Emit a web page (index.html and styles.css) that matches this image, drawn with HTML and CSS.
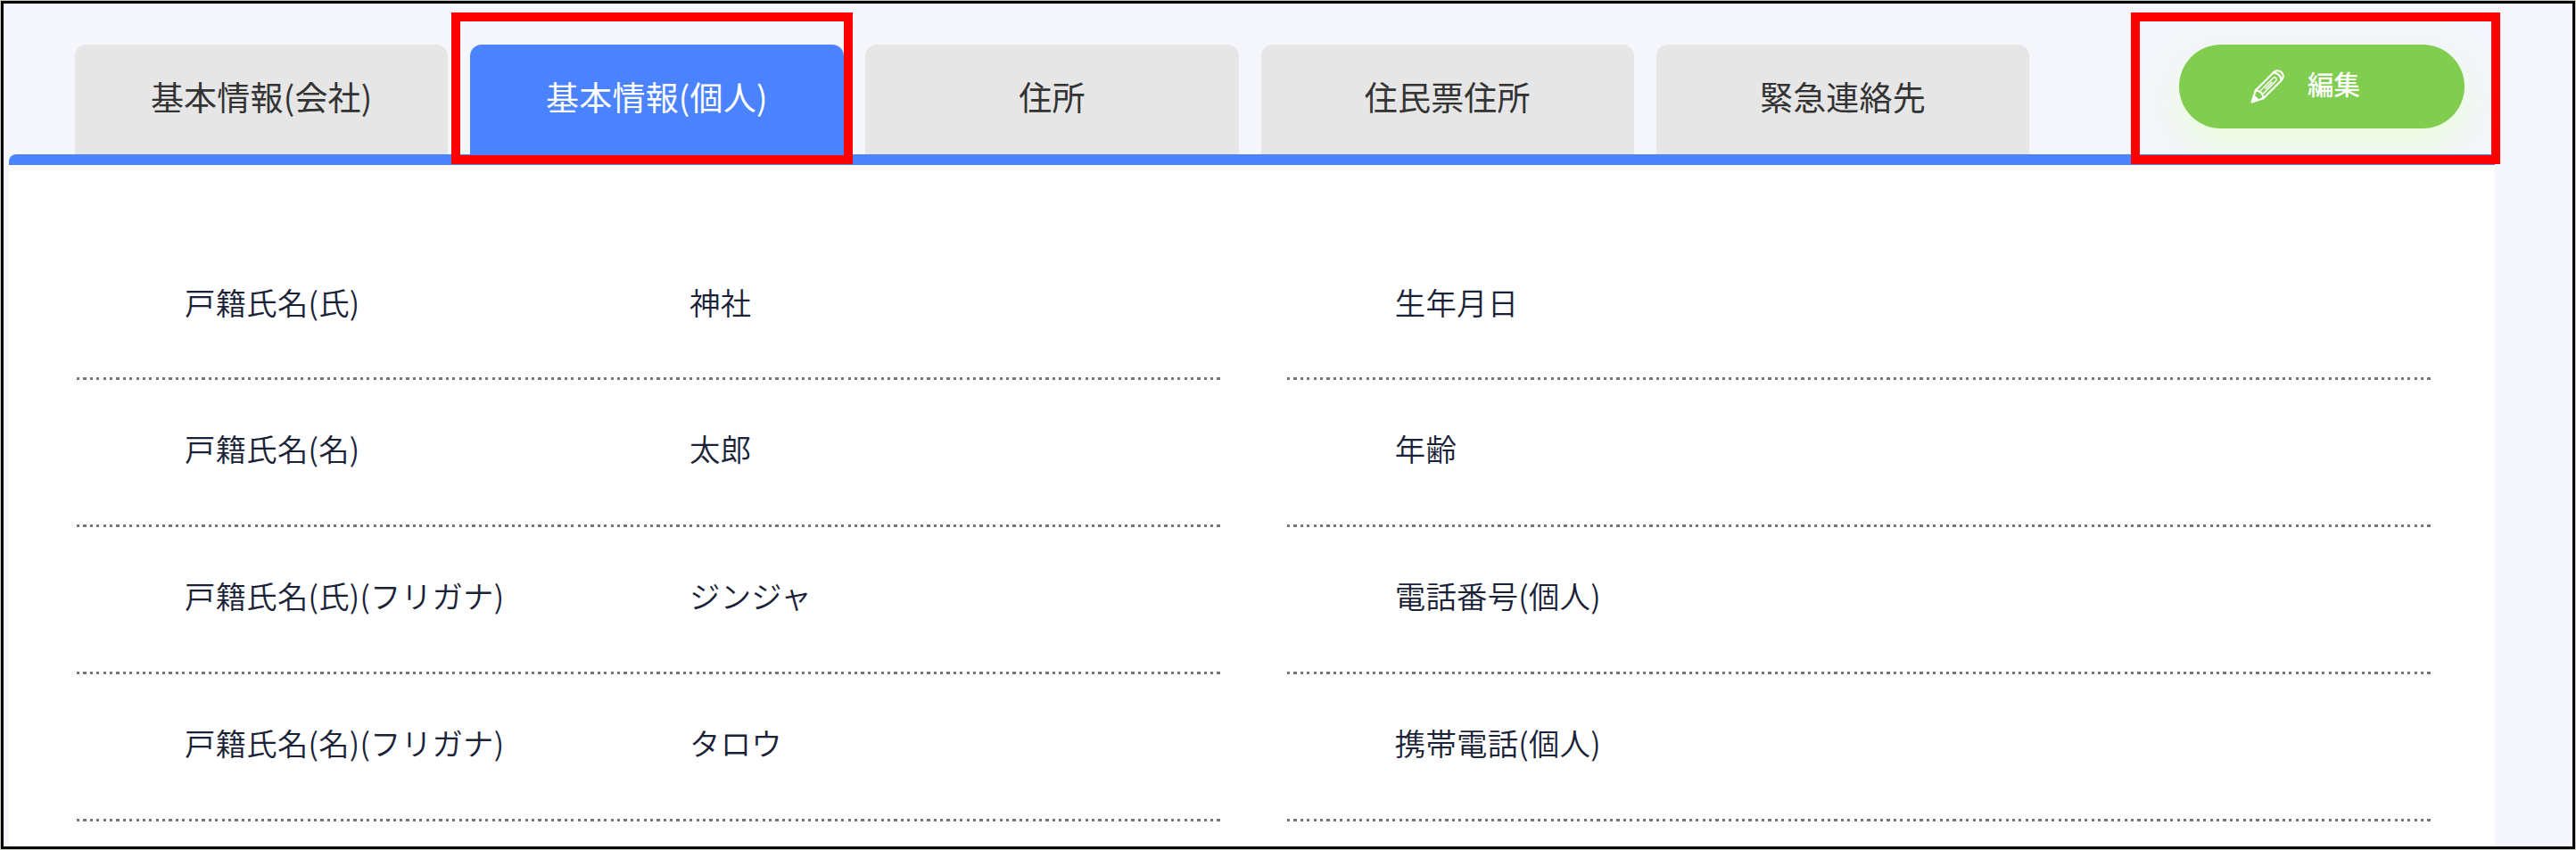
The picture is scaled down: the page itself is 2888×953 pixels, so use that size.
FILE: index.html
```html
<!DOCTYPE html>
<html lang="ja">
<head>
<meta charset="utf-8">
<title>基本情報(個人)</title>
<link rel="stylesheet" href="styles.css">
</head>
<body>
<main class="screen">
  <header class="toolbar">
    <nav class="tabs">
      <a class="tab">基本情報(会社)</a>
      <a class="tab tab-active">基本情報(個人)</a>
      <a class="tab">住所</a>
      <a class="tab">住民票住所</a>
      <a class="tab">緊急連絡先</a>
    </nav>
    <button class="edit" type="button">
      <svg class="pencil" viewBox="0 0 38 38" fill="none" stroke="#fff" stroke-width="2.2" stroke-linejoin="round" stroke-linecap="round">
        <path d="M1.6 36.4 5.8 23.4 25.8 3.4C28.8.4 32.6 1 34.9 3.2 37.2 5.5 37.6 9.2 34.6 12.2L14.6 32.2Z"/>
        <path d="M26.5 3.6C31 4.2 33.8 7 34.4 11.5M6 23.8C10.5 23.2 14.8 27.5 14.2 32"/>
        <path d="M11.5 23.5 25.5 9.5C28 7.8 30.4 10.4 28.6 12.6L14.8 26.6M17 21.2 23.8 14.4" stroke-width="1.5"/>
        <path d="M1.6 36.4 3.8 29.5C6 29.8 8.1 31.9 8.5 34.2Z" fill="#fff" stroke-width="1"/>
      </svg>
      <span class="edit-label">編集</span>
    </button>
  </header>
  <section class="panel">
    <dl class="column">
      <div class="row"><dt>戸籍氏名(氏)</dt><dd>神社</dd></div>
      <div class="row"><dt>戸籍氏名(名)</dt><dd>太郎</dd></div>
      <div class="row"><dt>戸籍氏名(氏)(フリガナ)</dt><dd>ジンジャ</dd></div>
      <div class="row"><dt>戸籍氏名(名)(フリガナ)</dt><dd>タロウ</dd></div>
    </dl>
    <dl class="column">
      <div class="row"><dt>生年月日</dt><dd></dd></div>
      <div class="row"><dt>年齢</dt><dd></dd></div>
      <div class="row"><dt>電話番号(個人)</dt><dd></dd></div>
      <div class="row"><dt>携帯電話(個人)</dt><dd></dd></div>
    </dl>
  </section>
  <div class="marker marker-tab"></div>
  <div class="marker marker-edit"></div>
</main>
</body>
</html>
```
FILE: styles.css
```css
* { box-sizing: border-box; }

body {
  margin: 0;
  padding: 1px;
  background: #c6cbc4;
  font-family: "Noto Sans CJK JP", sans-serif;
}

.screen {
  display: flex;
  flex-direction: column;
  width: 2886px;
  height: 951px;
  padding: 45.5px 87px 0 6px;
  border: 3px solid #000;
  background: #f4f6fb;
  overflow: hidden;
}

.toolbar {
  display: flex;
  justify-content: space-between;
  height: 123px;
  flex: none;
  padding: 0 34.5px 0 74px;
}

.tabs {
  display: flex;
  gap: 24.8px;
}

.tab {
  width: 418.4px;
  height: 123px;
  border-radius: 13px 13px 0 0;
  background: #e6e6e6;
  color: #333;
  font-size: 37px;
  line-height: 117px;
  text-align: center;
  letter-spacing: 0.2px;
}

.tab-active {
  background: #4b83ff;
  color: #fff;
}

.edit {
  display: flex;
  align-items: center;
  width: 320px;
  height: 94px;
  padding: 0 0 0 80.5px;
  gap: 26px;
  border: 0;
  border-radius: 47px;
  background: #80cd50;
  box-shadow: 0 18px 37px rgba(232, 255, 208, 0.75);
  color: #fff;
  font: 500 29.5px/44px "Noto Sans CJK JP", sans-serif;
}

.edit-label {
  padding-bottom: 7px;
}

.pencil {
  width: 38px;
  height: 38px;
}

.panel {
  display: flex;
  flex: 1;
  gap: 74.5px;
  padding: 77px 72px 0 76px;
  border-top: 12.5px solid #4b83ff;
  border-radius: 8px 0 0 0;
  background: #fff;
}

.column {
  flex: 1;
  margin: 0;
}

.row {
  display: flex;
  height: 164.8px;
  padding: 50px 0 0 121px;
  background: repeating-linear-gradient(90deg, #777 0 3.2px, transparent 3.2px 7.39px) left bottom / 100% 3px no-repeat;
  color: #1a2238;
  font-size: 34.4px;
  line-height: 52px;
  letter-spacing: 0.25px;
  font-weight: 350;
}

dt { width: 566px; }
dd { margin: 0; }

.marker {
  position: absolute;
  top: 14px;
  height: 170px;
  border: 10px solid #f00;
}

.marker-tab {
  left: 506px;
  width: 450px;
}

.marker-edit {
  left: 2389px;
  width: 414px;
}
```
